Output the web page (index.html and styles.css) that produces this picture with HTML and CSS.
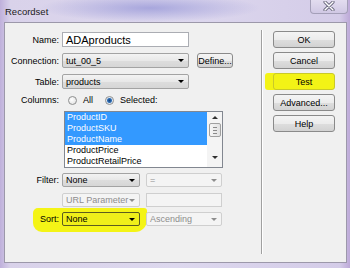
FILE: index.html
```html
<!DOCTYPE html>
<html lang="en">
<head>
    <meta charset="UTF-8">
    <meta name="viewport" content="width=device-width, initial-scale=1.0">
    <title>Recordset</title>
    <link rel="stylesheet" href="styles.css">
</head>
<body>

    <div id="window">
        <!-- TITLE BAR -->
        <div id="titlebar">
            <span id="title">Recordset</span>
            <div id="close">
                <svg width="12" height="10" viewBox="0 0 12 10">
                    <path d="M2 1 L10 9 M10 1 L2 9" stroke="#6d6a80" stroke-width="3.2" stroke-linecap="round"/>
                    <path d="M2 1 L10 9 M10 1 L2 9" stroke="#ffffff" stroke-width="1.4" stroke-linecap="round"/>
                </svg>
            </div>
        </div>

        <div id="panel">
            <!-- FORM -->
            <div id="form">
                <div class="row">
                    <span class="label">Name:</span>
                    <div class="textbox name">ADAproducts</div>
                </div>
                <div class="row r-conn">
                    <span class="label">Connection:</span>
                    <div class="combo wide"><span>tut_00_5</span><span class="arrow"></span></div>
                    <button class="btn define">Define...</button>
                </div>
                <div class="row r-table">
                    <span class="label">Table:</span>
                    <div class="combo wide"><span>products</span><span class="arrow"></span></div>
                </div>
                <div class="row r-columns">
                    <span class="label">Columns:</span>
                    <span class="radio"></span><span class="opt">All</span>
                    <span class="radio checked"></span><span class="opt">Selected:</span>
                </div>
                <div id="listbox">
                    <div class="items">
                        <div class="item selected">ProductID</div>
                        <div class="item selected">ProductSKU</div>
                        <div class="item selected">ProductName</div>
                        <div class="item">ProductPrice</div>
                        <div class="item">ProductRetailPrice</div>
                    </div>
                    <div class="scrollbar">
                        <span class="sarrow up"></span>
                        <div class="thumb"><i></i><i></i><i></i></div>
                        <span class="sarrow down"></span>
                    </div>
                </div>
                <div class="row r-filter">
                    <span class="label">Filter:</span>
                    <div class="combo half"><span>None</span><span class="arrow"></span></div>
                    <div class="combo half disabled second"><span>=</span><span class="arrow"></span></div>
                </div>
                <div class="row r-url">
                    <span class="label"></span>
                    <div class="combo half disabled"><span>URL Parameter</span><span class="arrow"></span></div>
                    <div class="textbox half disabled second"></div>
                </div>
                <div class="row r-sort">
                    <span class="marker"></span>
                    <span class="label">Sort:</span>
                    <div class="combo half marked"><span>None</span><span class="arrow"></span></div>
                    <div class="combo half disabled second"><span>Ascending</span><span class="arrow"></span></div>
                </div>
            </div>

            <div id="separator"></div>

            <!-- BUTTONS -->
            <div id="buttons">
                <button class="btn">OK</button>
                <button class="btn">Cancel</button>
                <button class="btn test">Test</button>
                <button class="btn">Advanced...</button>
                <button class="btn">Help</button>
            </div>
        </div>
    </div>

</body>
</html>
```

FILE: styles.css
```css
* {
    box-sizing: border-box;
}

body {
    margin: 0;
    width: 350px;
    height: 268px;
    overflow: hidden;
    font-family: "Liberation Sans", Arial, sans-serif;
    font-size: 9px;
    color: #000000;
    background:
        radial-gradient(ellipse 110px 14px at 150px 8px, rgba(150, 150, 215, 0.75), transparent),
        linear-gradient(to right, #bfb0db 0, #d9d2ea 3%, #ddd8ee 50%, #d4cce8 97%, #bda9d8 100%);
}

/* TITLE BAR */
#window {
    display: flex;
    flex-direction: column;
    height: 268px;
}

#titlebar {
    display: flex;
    height: 22px;
    padding-left: 5px;
}

#title {
    padding-top: 6px;
    font-size: 9.5px;
    color: #1a1a1a;
}

#close {
    display: flex;
    align-items: center;
    justify-content: center;
    width: 38px;
    height: 15px;
    margin-left: auto;
    margin-right: 2px;
    margin-top: -1px;
    border: 1px solid #a49fb8;
    border-top: none;
    border-radius: 0 0 4px 4px;
    background: linear-gradient(#e4def0, #d0c8e4);
}

/* PANEL */
#panel {
    display: flex;
    flex: 1;
    margin: 0 3px 5px 4px;
    border: 1px solid #9c98aa;
    background-color: #f0f0f0;
}

#form {
    display: flex;
    flex-direction: column;
    gap: 6px;
    width: 256px;
    padding-top: 9px;
}

.row {
    display: flex;
    align-items: center;
    height: 15px;
}

.label {
    width: 54px;
    margin-right: 3px;
    text-align: right;
}

.r-columns {
    height: 14px;
    margin-top: -2px;
}

.r-filter, .r-url, .r-sort {
    height: 14px;
}

.r-filter {
    margin-top: -1px;
}

.r-sort {
    position: relative;
    margin-top: -1px;
}

/* CONTROLS */
.textbox {
    height: 100%;
    border: 1px solid #abadb3;
    background-color: #ffffff;
    padding-left: 3px;
    line-height: 13px;
}

.textbox.name {
    width: 127px;
    font-size: 11px;
    line-height: 14px;
}

.combo {
    display: flex;
    align-items: center;
    justify-content: space-between;
    height: 100%;
    padding: 0 4px 0 3px;
    border: 1px solid #a3a3a3;
    border-radius: 2px;
    background: linear-gradient(#f3f3f3, #e8e8e8 50%, #dddddd 51%, #d6d6d6);
}

.wide {
    width: 127px;
}

.half {
    width: 78px;
}

.second {
    margin-left: 6px;
    width: 76px;
}

.arrow {
    width: 0;
    height: 0;
    border-left: 3px solid transparent;
    border-right: 3px solid transparent;
    border-top: 3px solid #000000;
}

.disabled {
    color: #8d8d8d;
    border-color: #cfcfcf;
    background: #f4f4f4;
}

.disabled .arrow {
    border-top-color: #8d8d8d;
}

.marker {
    position: absolute;
    left: 28px;
    top: -4px;
    width: 114px;
    height: 24px;
    border-radius: 5px 3px 12px 9px;
    background-color: #f4f416;
}

.r-sort .label, .r-sort .combo {
    position: relative;
}

.combo.marked {
    border-color: #5c5c20;
    background: #efef1a;
}

/* RADIO */
.radio {
    width: 9px;
    height: 9px;
    margin-left: 6px;
    border: 1px solid #8e8f8f;
    border-radius: 50%;
    background: radial-gradient(circle at 40% 40%, #ffffff, #dcdcdc);
}

.radio.checked {
    margin-left: 12px;
    background: radial-gradient(circle, #16407a 0, #2f6fb6 2px, #dfe8f2 3px, #ffffff);
}

.opt {
    margin-left: 6px;
}

/* LIST */
#listbox {
    display: flex;
    width: 159px;
    height: 57px;
    margin-left: 59px;
    margin-top: -2px;
    border: 1px solid #828790;
    background-color: #ffffff;
}

.items {
    flex: 1;
}

.item {
    height: 11px;
    padding-left: 2px;
    line-height: 11px;
}

.item.selected {
    background-color: #3399ff;
    color: #ffffff;
}

.scrollbar {
    display: flex;
    flex-direction: column;
    align-items: center;
    width: 15px;
    padding-top: 4px;
    background-color: #f4f4f4;
}

.sarrow {
    width: 0;
    height: 0;
    border-left: 3px solid transparent;
    border-right: 3px solid transparent;
}

.sarrow.up {
    border-bottom: 3px solid #303030;
}

.sarrow.down {
    margin-top: auto;
    margin-bottom: 8px;
    border-top: 3px solid #303030;
}

.thumb {
    display: flex;
    flex-direction: column;
    justify-content: center;
    gap: 2px;
    width: 12px;
    height: 14px;
    margin-top: 4px;
    padding: 0 3px;
    border: 1px solid #a0a0a0;
    border-radius: 2px;
    background: linear-gradient(to right, #f6f6f6, #e2e2e2);
}

.thumb i {
    height: 1px;
    background-color: #8a8a8a;
}

/* SEPARATOR - BUTTONS */
#separator {
    width: 1px;
    margin: 7px 0 8px 0;
    background-color: #a0a0a0;
    box-shadow: 1px 0 0 #ffffff;
}

#buttons {
    display: flex;
    flex-direction: column;
    gap: 4px;
    padding-top: 8px;
    padding-left: 11px;
}

.btn {
    width: 62px;
    height: 17px;
    padding: 0;
    border: 1px solid #8a8a8a;
    border-radius: 3px;
    background: linear-gradient(#f4f4f4, #ececec 50%, #dedede 51%, #d2d2d2);
    font-family: "Liberation Sans", Arial, sans-serif;
    font-size: 9px;
    color: #000000;
}

.btn.define {
    width: 36px;
    height: 15px;
    margin-left: 8px;
}

.btn.test {
    border-color: #c9c92a;
    background: #f3f316;
    box-shadow: -8px 0 0 #f3f316;
}
```
